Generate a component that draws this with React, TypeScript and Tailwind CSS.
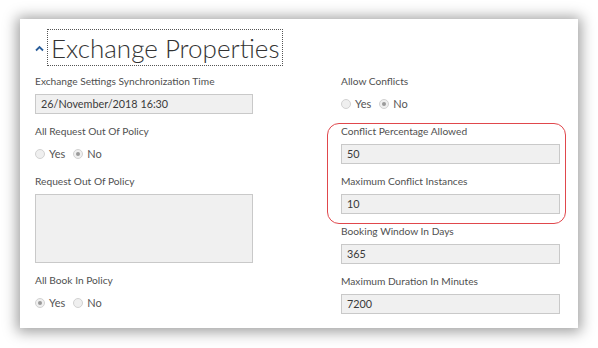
import React from "react";

const font = { fontFamily: 'Lato, "Open Sans", sans-serif' };

function Radio({ checked }: { checked?: boolean }) {
  return (
    <span className="w-[10px] h-[10px] rounded-full border border-[#d2d2d2] bg-[#efefef] flex items-center justify-center">
      {checked && <span className="w-[4px] h-[4px] rounded-full bg-[#9a9a9a]" />}
    </span>
  );
}

function YesNo({ yes }: { yes: boolean }) {
  return (
    <div className="h-[20px] flex items-center text-[11px] text-[#555]">
      <Radio checked={yes} />
      <span className="ml-[4px] mr-[8px]">Yes</span>
      <Radio checked={!yes} />
      <span className="ml-[4px]">No</span>
    </div>
  );
}

function Field({ label, children }: { label: string; children: React.ReactNode }) {
  return (
    <div className="flex flex-col">
      <div className="text-[10.2px] leading-[16px] text-[#505050] mb-[5px] whitespace-nowrap">{label}</div>
      {children}
    </div>
  );
}

function Input({ value }: { value: string }) {
  return (
    <div className="h-[20px] border border-[#c9c9c9] bg-[#f0f0f0] pl-[5px] text-[10.8px] leading-[18px] text-[#3a3a3a]">
      {value}
    </div>
  );
}

export default function App() {
  return (
    <div className="w-[598px] h-[348px] bg-white pt-[19px] pl-[20px]" style={font}>
      <div className="relative w-[558px] h-[309px] bg-white shadow-[0_1px_13px_3px_rgba(0,0,0,0.38)] pl-[15px] pt-[10px]">
        {/* title */}
        <div className="flex items-center">
          <svg width="9" height="7" viewBox="0 0 9 7" className="mt-[2px]">
            <polyline points="1,5.5 4.5,2 8,5.5" fill="none" stroke="#2a5d9a" strokeWidth="1.8" />
          </svg>
          <div className="ml-[3px] h-[37px] border border-dotted border-[#555] px-[3px] flex items-center">
            <span className="text-[26px] font-light text-[#333] leading-none">Exchange Properties</span>
          </div>
        </div>

        <div className="mt-[7px] grid grid-cols-[218px_219px] gap-x-[88px]">
          <div className="flex flex-col gap-[9px]">
            <Field label="Exchange Settings Synchronization Time">
              <Input value="26/November/2018 16:30" />
            </Field>
            <Field label="All Request Out Of Policy">
              <YesNo yes={false} />
            </Field>
            <Field label="Request Out Of Policy">
              <div className="h-[69px] border border-[#c9c9c9] bg-[#f0f0f0]" />
            </Field>
            <Field label="All Book In Policy">
              <YesNo yes={true} />
            </Field>
          </div>
          <div className="flex flex-col gap-[9px]">
            <Field label="Allow Conflicts">
              <YesNo yes={false} />
            </Field>
            <Field label="Conflict Percentage Allowed">
              <Input value="50" />
            </Field>
            <Field label="Maximum Conflict Instances">
              <Input value="10" />
            </Field>
            <Field label="Booking Window In Days">
              <Input value="365" />
            </Field>
            <Field label="Maximum Duration In Minutes">
              <Input value="7200" />
            </Field>
          </div>
        </div>

        {/* annotation */}
        <div className="absolute left-[307px] top-[104px] w-[239px] h-[101px] rounded-[12px] border border-[#e0474c]" />
      </div>
    </div>
  );
}
